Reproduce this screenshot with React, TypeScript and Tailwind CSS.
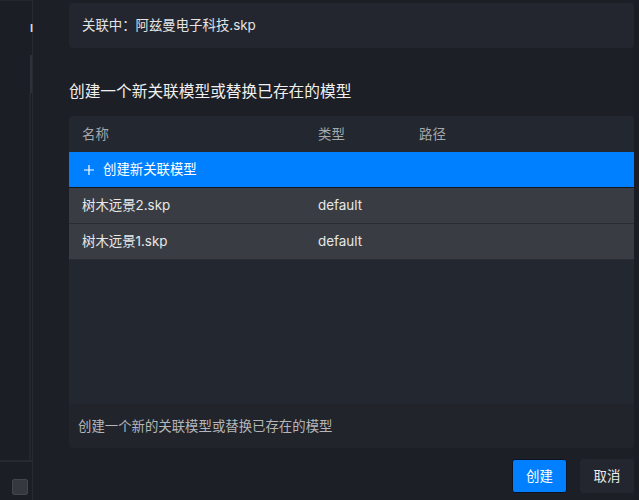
export default function App() {
  const font = { fontFamily: 'Inter, "Noto Sans CJK SC", sans-serif' };
  const rows = [
    { name: "树木远景2.skp", type: "default" },
    { name: "树木远景1.skp", type: "default" },
  ];
  return (
    <div
      className="flex h-[500px] w-[639px] overflow-hidden bg-[#1c1f26] text-[13.4px]"
      style={font}
    >
      <aside className="flex w-[33px] shrink-0 flex-col border-r border-[#262a31] bg-[#1b1e25]">
        <div className="h-px bg-[#23262d]" />
        <div className="relative flex-1">
          <span className="absolute left-[30px] top-[22px] text-[11px] font-bold leading-none text-[#d8d8d8]">
            I
          </span>
          <div className="absolute right-0 top-[54px] h-[38px] w-[2px] bg-[#2d3139]" />
          <div className="absolute right-[1px] bottom-0 top-[92px] w-[2px] bg-[#23262d]" />
        </div>
        <div className="h-[40px] border-t-2 border-[#262a31] pl-[12px] pt-[17px]">
          <div className="h-[16px] w-[16px] rounded-[2px] border border-[#42454c] bg-[#35383f]" />
        </div>
      </aside>

      <main className="flex flex-1 flex-col pl-[36px]">
        <div className="mt-[3px] flex h-[45px] items-center rounded-[4px] bg-[#23262e] pl-[13px] text-[#e2e3e5]">
          关联中：阿兹曼电子科技.skp
        </div>

        <h2 className="mt-[32px] mb-[12px] text-[15.7px] leading-[24px] text-[#f0f0f0]">
          创建一个新关联模型或替换已存在的模型
        </h2>

        <div className="flex h-[288px] flex-col rounded-t-[4px] bg-[#23272f]">
          <div className="flex h-[36px] items-center pl-[13px] text-[#a5a8ad]">
            <div className="w-[236px]">名称</div>
            <div className="w-[101px]">类型</div>
            <div>路径</div>
          </div>
          <div className="flex h-[36px] items-center border-b border-[#15171c] bg-[#0080ff] pl-[15px] text-white">
            <svg width="10" height="10" viewBox="0 0 10 10" className="mr-[9px]">
              <path d="M5 0V10M0 5H10" stroke="white" strokeWidth="1.2" />
            </svg>
            创建新关联模型
          </div>
          {rows.map((r) => (
            <div
              key={r.name}
              className="flex h-[36px] items-center border-b border-[#2a2c31] bg-[#393c42] pl-[13px] text-[#e8e8e8]"
            >
              <div className="w-[236px]">{r.name}</div>
              <div className="w-[101px]">{r.type}</div>
            </div>
          ))}
        </div>

        <div className="flex h-[44px] items-center rounded-b-[4px] bg-[#21242b] pl-[9px] text-[#b4b6ba]">
          创建一个新的关联模型或替换已存在的模型
        </div>

        <div className="mt-[11px] flex justify-end gap-[13px]">
          <button className="flex h-[34px] w-[55px] items-center justify-center rounded-[3px] border border-[#0c1424] bg-[#0080ff] text-white">
            创建
          </button>
          <button className="flex h-[34px] w-[54px] items-center justify-center rounded-[3px] bg-[#23262e] text-[#ececec]">
            取消
          </button>
        </div>
      </main>
      <div className="w-[5px] shrink-0 bg-[#1a1d23]" />
    </div>
  );
}
